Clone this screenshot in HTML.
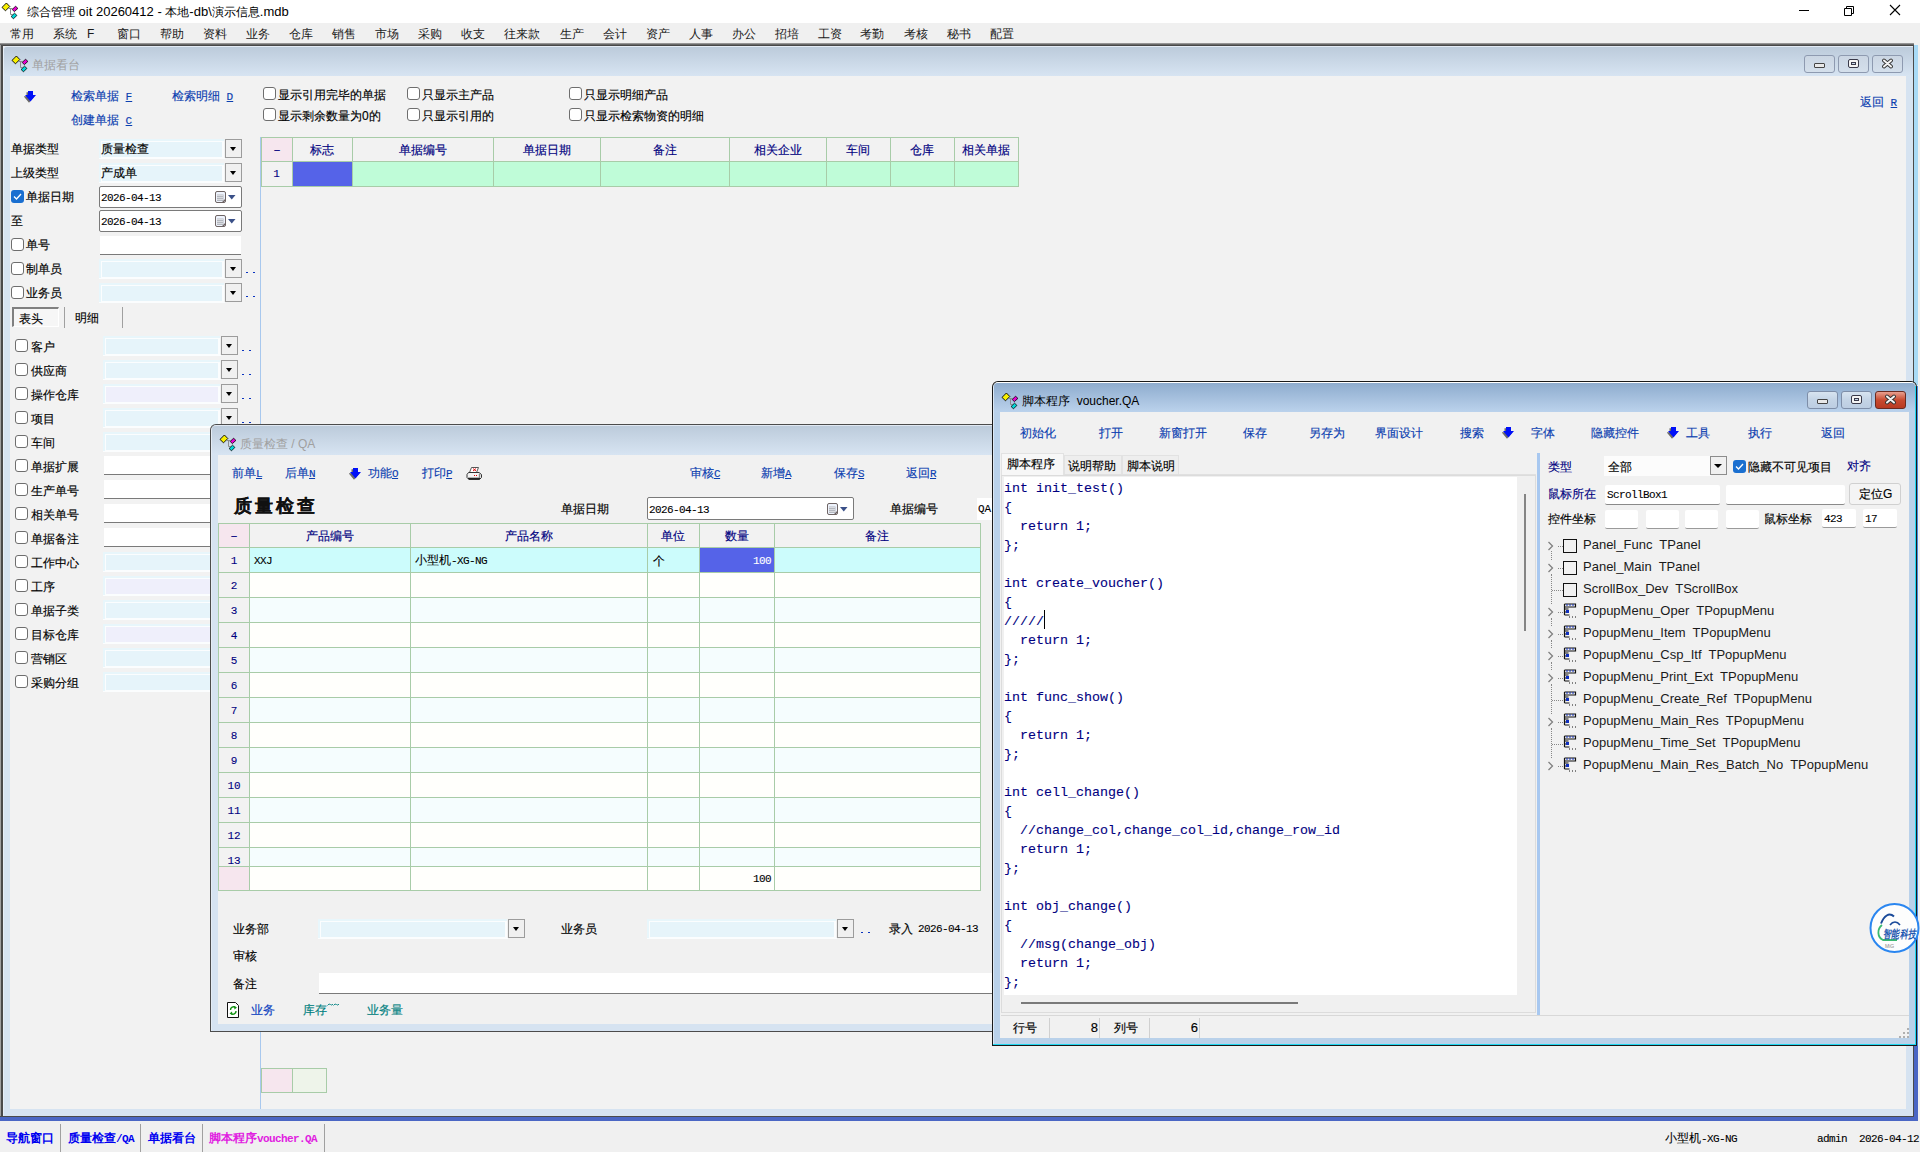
<!DOCTYPE html><html><head><meta charset="utf-8"><style>
*{margin:0;padding:0;box-sizing:border-box}
html,body{width:1920px;height:1152px;overflow:hidden;background:#f0f0f0}
body{position:relative;font-family:"Liberation Sans",sans-serif;font-size:12px;color:#000}
div{position:absolute}
.t{white-space:pre;-webkit-text-stroke:0.15px currentColor}
.ns{-webkit-text-stroke:0}
.t.m{font-family:"Liberation Mono",monospace;-webkit-text-stroke:0.1px currentColor}
.lk{color:#0c40b0}
.nv{color:#000080}
.cb{width:13px;height:13px;border:1px solid #6e6e6e;border-radius:3px;background:#fff}
.cbk{width:13px;height:13px;border-radius:3px;background:#1a6fd0}
.dd{background:#f0f0f0;border:1px solid #8a8a8a}
.ddarr{width:0;height:0;border-left:4px solid transparent;border-right:4px solid transparent;border-top:4px solid #000}
</style></head><body><div style="left:0px;top:0px;width:1920px;height:23px;background:#fff"></div>
<svg style="position:absolute;left:1px;top:0px" width="20" height="20" viewBox="0 0 20 20">
<path d="M7.8 8.5H11.5M9.5 8.5V14.5H11.5" stroke="#8c8c8c" stroke-width="1" fill="none"/>
<path d="M5.4 3L8.8 6.5L4.5 10.8L1 7.4Z" fill="#f8f000" stroke="#000" stroke-width="0.9"/>
<path d="M14.5 6.2L16.9 8.4L13.4 11.6L11.2 9.5Z" fill="#e800d0" stroke="#000" stroke-width="0.8"/>
<path d="M13.5 13.2L15.9 15.4L12.5 18.8L10.1 16.5Z" fill="#00d8d8" stroke="#000" stroke-width="0.8"/>
</svg>
<div class="t ns" style="left:27px;top:4.0px;height:16px;line-height:16px;font-size:12px">综合管理<span style="font-size:13px"> oit 20260412 - </span>本地<span style="font-size:13px">-db\</span>演示信息<span style="font-size:13px">.mdb</span></div>
<div style="left:1799px;top:10px;width:10px;height:1px;background:#000"></div>
<svg style="position:absolute;left:1843px;top:4px" width="13" height="13"><path d="M1.5 4.5h7v7h-7z M3.5 4.5V2.5h7v7h-2" stroke="#000" stroke-width="1" fill="none"/></svg>
<svg style="position:absolute;left:1889px;top:4px" width="13" height="13"><path d="M1 1L11 11M11 1L1 11" stroke="#000" stroke-width="1.1"/></svg>
<div style="left:0px;top:23px;width:1920px;height:20px;background:#f0f0f0"></div>
<div class="t ns" style="left:10px;top:26.0px;height:16px;line-height:16px;font-size:12px;color:#1a1a1a">常用</div>
<div class="t ns" style="left:53px;top:26.0px;height:16px;line-height:16px;font-size:12px;color:#1a1a1a">系统</div>
<div class="t ns" style="left:87px;top:26.0px;height:16px;line-height:16px;font-size:12px;color:#1a1a1a">F</div>
<div class="t ns" style="left:117px;top:26.0px;height:16px;line-height:16px;font-size:12px;color:#1a1a1a">窗口</div>
<div class="t ns" style="left:160px;top:26.0px;height:16px;line-height:16px;font-size:12px;color:#1a1a1a">帮助</div>
<div class="t ns" style="left:203px;top:26.0px;height:16px;line-height:16px;font-size:12px;color:#1a1a1a">资料</div>
<div class="t ns" style="left:246px;top:26.0px;height:16px;line-height:16px;font-size:12px;color:#1a1a1a">业务</div>
<div class="t ns" style="left:289px;top:26.0px;height:16px;line-height:16px;font-size:12px;color:#1a1a1a">仓库</div>
<div class="t ns" style="left:332px;top:26.0px;height:16px;line-height:16px;font-size:12px;color:#1a1a1a">销售</div>
<div class="t ns" style="left:375px;top:26.0px;height:16px;line-height:16px;font-size:12px;color:#1a1a1a">市场</div>
<div class="t ns" style="left:418px;top:26.0px;height:16px;line-height:16px;font-size:12px;color:#1a1a1a">采购</div>
<div class="t ns" style="left:461px;top:26.0px;height:16px;line-height:16px;font-size:12px;color:#1a1a1a">收支</div>
<div class="t ns" style="left:504px;top:26.0px;height:16px;line-height:16px;font-size:12px;color:#1a1a1a">往来款</div>
<div class="t ns" style="left:560px;top:26.0px;height:16px;line-height:16px;font-size:12px;color:#1a1a1a">生产</div>
<div class="t ns" style="left:603px;top:26.0px;height:16px;line-height:16px;font-size:12px;color:#1a1a1a">会计</div>
<div class="t ns" style="left:646px;top:26.0px;height:16px;line-height:16px;font-size:12px;color:#1a1a1a">资产</div>
<div class="t ns" style="left:689px;top:26.0px;height:16px;line-height:16px;font-size:12px;color:#1a1a1a">人事</div>
<div class="t ns" style="left:732px;top:26.0px;height:16px;line-height:16px;font-size:12px;color:#1a1a1a">办公</div>
<div class="t ns" style="left:775px;top:26.0px;height:16px;line-height:16px;font-size:12px;color:#1a1a1a">招培</div>
<div class="t ns" style="left:818px;top:26.0px;height:16px;line-height:16px;font-size:12px;color:#1a1a1a">工资</div>
<div class="t ns" style="left:860px;top:26.0px;height:16px;line-height:16px;font-size:12px;color:#1a1a1a">考勤</div>
<div class="t ns" style="left:904px;top:26.0px;height:16px;line-height:16px;font-size:12px;color:#1a1a1a">考核</div>
<div class="t ns" style="left:947px;top:26.0px;height:16px;line-height:16px;font-size:12px;color:#1a1a1a">秘书</div>
<div class="t ns" style="left:990px;top:26.0px;height:16px;line-height:16px;font-size:12px;color:#1a1a1a">配置</div>
<div style="left:1914px;top:45px;width:4px;height:340px;background:#a8daf6"></div>
<div style="left:1918px;top:45px;width:2px;height:1076px;background:#f0f0f0"></div>
<div style="left:1914px;top:1045px;width:4px;height:76px;background:#4a66c4"></div>
<div style="left:0px;top:1117px;width:1918px;height:4px;background:#4a66c4"></div>
<div style="left:0px;top:43px;width:1914px;height:1px;background:#959595"></div>
<div style="left:0px;top:44px;width:1914px;height:1px;background:#686868"></div>
<div style="left:0px;top:45px;width:1914px;height:1px;background:#474747"></div>
<div style="left:0px;top:45px;width:1px;height:1072px;background:#a0a0a0"></div>
<div style="left:1px;top:45px;width:2px;height:1072px;background:#4a4a4a"></div>
<div style="left:1913px;top:45px;width:1px;height:1072px;background:#4a4a4a"></div>
<div style="left:0px;top:1116px;width:1914px;height:1px;background:#4a4a4a"></div>
<div style="left:3px;top:46px;width:1910px;height:1070px;background:#d6e3f1;border-top:1px solid #e3ebf5;border-left:1px solid #e6eef7;border-top-left-radius:4px"></div>
<div style="left:4px;top:47px;width:1909px;height:29px;background:linear-gradient(#bccbdb,#d7e4f2);border-top-left-radius:3px"></div>
<div style="left:10px;top:76px;width:1896px;height:1033px;background:#f2f2f2"></div>
<svg style="position:absolute;left:11px;top:53px" width="20" height="20" viewBox="0 0 20 20">
<path d="M7.8 8.5H11.5M9.5 8.5V14.5H11.5" stroke="#8c8c8c" stroke-width="1" fill="none"/>
<path d="M5.4 3L8.8 6.5L4.5 10.8L1 7.4Z" fill="#f8f000" stroke="#000" stroke-width="0.9"/>
<path d="M14.5 6.2L16.9 8.4L13.4 11.6L11.2 9.5Z" fill="#e800d0" stroke="#000" stroke-width="0.8"/>
<path d="M13.5 13.2L15.9 15.4L12.5 18.8L10.1 16.5Z" fill="#00d8d8" stroke="#000" stroke-width="0.8"/>
</svg>
<div class="t ns" style="left:32px;top:57.0px;height:16px;line-height:16px;font-size:12px;color:#a0a0a0">单据看台</div>
<div style="left:1804px;top:55px;width:31px;height:18px;background:linear-gradient(#cbd6e3,#d4dfeb);border:1px solid #8e9ab0;border-radius:3px"></div>
<div style="left:1838px;top:55px;width:31px;height:18px;background:linear-gradient(#cbd6e3,#d4dfeb);border:1px solid #8e9ab0;border-radius:3px"></div>
<div style="left:1872px;top:55px;width:31px;height:18px;background:linear-gradient(#cbd6e3,#d4dfeb);border:1px solid #8e9ab0;border-radius:3px"></div>
<div style="left:1814px;top:63px;width:11px;height:5px;background:#e8e8e8;border:1px solid #444;border-radius:1px"></div>
<div style="left:1848px;top:59px;width:11px;height:9px;background:#f4f4f4;border:1.5px solid #3a3a4a;border-radius:2px"><div style="left:2px;top:2px;width:5px;height:3px;border:1px solid #3a3a4a;background:#c8d8ea"></div></div>
<svg style="position:absolute;left:1881px;top:58px" width="13" height="11"><path d="M3 2.5L10 8.5M10 2.5L3 8.5" stroke="#333" stroke-width="3.8" stroke-linecap="round"/><path d="M3 2.5L10 8.5M10 2.5L3 8.5" stroke="#f4f4f4" stroke-width="2" stroke-linecap="round"/></svg>
<svg style="position:absolute;left:24px;top:89.5px" width="13" height="13"><path d="M3 1h5v4h3l-5.5 6.5L0 5h3z" fill="#6a6a6a" transform="translate(-0.5,1.2)"/><path d="M3 1h5v4h3l-5.5 6.5L0 5h3z" fill="#0010f8" transform="translate(1,0)"/></svg>
<div class="t lk" style="left:71px;top:88.0px;height:16px;line-height:16px;font-size:12px">检索单据<span style="font-family:Liberation Mono;font-size:11px"> <u>F</u></span></div>
<div class="t lk" style="left:172px;top:88.0px;height:16px;line-height:16px;font-size:12px">检索明细<span style="font-family:Liberation Mono;font-size:11px"> <u>D</u></span></div>
<div class="t lk" style="left:71px;top:112.0px;height:16px;line-height:16px;font-size:12px">创建单据<span style="font-family:Liberation Mono;font-size:11px"> <u>C</u></span></div>
<div class="t lk" style="left:1860px;top:94.0px;height:16px;line-height:16px;font-size:12px">返回<span style="font-family:Liberation Mono;font-size:11px"> <u>R</u></span></div>
<div class="cb" style="left:263px;top:87px"></div>
<div class="t" style="left:278px;top:86.5px;height:16px;line-height:16px;font-size:12px">显示引用完毕的单据</div>
<div class="cb" style="left:263px;top:108px"></div>
<div class="t" style="left:278px;top:107.5px;height:16px;line-height:16px;font-size:12px">显示剩余数量为0的</div>
<div class="cb" style="left:407px;top:87px"></div>
<div class="t" style="left:422px;top:86.5px;height:16px;line-height:16px;font-size:12px">只显示主产品</div>
<div class="cb" style="left:407px;top:108px"></div>
<div class="t" style="left:422px;top:107.5px;height:16px;line-height:16px;font-size:12px">只显示引用的</div>
<div class="cb" style="left:569px;top:87px"></div>
<div class="t" style="left:584px;top:86.5px;height:16px;line-height:16px;font-size:12px">只显示明细产品</div>
<div class="cb" style="left:569px;top:108px"></div>
<div class="t" style="left:584px;top:107.5px;height:16px;line-height:16px;font-size:12px">只显示检索物资的明细</div>
<div style="left:260px;top:137px;width:1px;height:972px;background:#a8c8ee"></div>
<div class="t" style="left:11px;top:141.0px;height:16px;line-height:16px;font-size:12px">单据类型</div>
<div style="left:99px;top:139px;width:125px;height:19px;background:#e8f6fb"></div>
<div style="left:99px;top:158px;width:126px;height:1px;background:#fbfdfe"></div>
<div style="left:101px;top:141px;width:123px;height:17px;background:#e6f4fa;border:1px solid #fbfdfe;border-right-width:2px"></div>
<div style="left:225px;top:139px;width:17px;height:19px;background:#f0f0f0;border:1px solid #9c9c9c"></div>
<div class="ddarr" style="left:229.5px;top:147.0px;border-left-width:3.5px;border-right-width:3.5px"></div>
<div class="t" style="left:101px;top:141.0px;height:16px;line-height:16px;font-size:12px">质量检查</div>
<div class="t" style="left:11px;top:165.0px;height:16px;line-height:16px;font-size:12px">上级类型</div>
<div style="left:99px;top:163px;width:125px;height:19px;background:#e8f6fb"></div>
<div style="left:99px;top:182px;width:126px;height:1px;background:#fbfdfe"></div>
<div style="left:101px;top:165px;width:123px;height:17px;background:#e6f4fa;border:1px solid #fbfdfe;border-right-width:2px"></div>
<div style="left:225px;top:163px;width:17px;height:19px;background:#f0f0f0;border:1px solid #9c9c9c"></div>
<div class="ddarr" style="left:229.5px;top:171.0px;border-left-width:3.5px;border-right-width:3.5px"></div>
<div class="t" style="left:101px;top:165.0px;height:16px;line-height:16px;font-size:12px">产成单</div>
<div class="cbk" style="left:11px;top:190px"><svg width="13" height="13" style="position:absolute;left:0;top:0"><path d="M3 6.5L5.5 9L10 4" stroke="#fff" stroke-width="1.3" fill="none"/></svg></div>
<div class="t" style="left:26px;top:189.0px;height:16px;line-height:16px;font-size:12px">单据日期</div>
<div style="left:99px;top:186px;width:143px;height:22px;background:#fff;border:1px solid #7a7a7a;border-radius:2px"></div>
<div class="t m" style="left:101px;top:190.0px;height:16px;line-height:16px;font-size:11px;letter-spacing:-0.6px">2026-04-13</div>
<svg style="position:absolute;left:215px;top:191.0px" width="12" height="13"><rect x="0.5" y="0.5" width="10" height="11" rx="1.5" fill="#eef3fc" stroke="#6e6464"/><rect x="2" y="3.5" width="6.5" height="6.5" fill="#b4b8c0"/><rect x="2.5" y="4" width="1" height="1" fill="#fff"/><rect x="2.5" y="6" width="1" height="1" fill="#fff"/><rect x="2.5" y="8" width="1" height="1" fill="#fff"/><rect x="4.5" y="4" width="1" height="1" fill="#fff"/><rect x="4.5" y="6" width="1" height="1" fill="#fff"/><rect x="4.5" y="8" width="1" height="1" fill="#fff"/><rect x="6.5" y="4" width="1" height="1" fill="#fff"/><rect x="6.5" y="6" width="1" height="1" fill="#fff"/><rect x="6.5" y="8" width="1" height="1" fill="#fff"/><path d="M7.5 11.5L10.5 8.5" stroke="#6e6464" stroke-width="1.2"/></svg>
<svg style="position:absolute;left:228px;top:195.0px" width="8" height="5"><path d="M0 0H7.5L3.75 4.5Z" fill="#3a5088"/></svg>
<div class="t" style="left:11px;top:213.0px;height:16px;line-height:16px;font-size:12px">至</div>
<div style="left:99px;top:210px;width:143px;height:22px;background:#fff;border:1px solid #7a7a7a;border-radius:2px"></div>
<div class="t m" style="left:101px;top:214.0px;height:16px;line-height:16px;font-size:11px;letter-spacing:-0.6px">2026-04-13</div>
<svg style="position:absolute;left:215px;top:215.0px" width="12" height="13"><rect x="0.5" y="0.5" width="10" height="11" rx="1.5" fill="#eef3fc" stroke="#6e6464"/><rect x="2" y="3.5" width="6.5" height="6.5" fill="#b4b8c0"/><rect x="2.5" y="4" width="1" height="1" fill="#fff"/><rect x="2.5" y="6" width="1" height="1" fill="#fff"/><rect x="2.5" y="8" width="1" height="1" fill="#fff"/><rect x="4.5" y="4" width="1" height="1" fill="#fff"/><rect x="4.5" y="6" width="1" height="1" fill="#fff"/><rect x="4.5" y="8" width="1" height="1" fill="#fff"/><rect x="6.5" y="4" width="1" height="1" fill="#fff"/><rect x="6.5" y="6" width="1" height="1" fill="#fff"/><rect x="6.5" y="8" width="1" height="1" fill="#fff"/><path d="M7.5 11.5L10.5 8.5" stroke="#6e6464" stroke-width="1.2"/></svg>
<svg style="position:absolute;left:228px;top:219.0px" width="8" height="5"><path d="M0 0H7.5L3.75 4.5Z" fill="#3a5088"/></svg>
<div class="cb" style="left:11px;top:238px"></div>
<div class="t" style="left:26px;top:237.0px;height:16px;line-height:16px;font-size:12px">单号</div>
<div style="left:100px;top:236px;width:141px;height:19px;background:#fff;border-bottom:1px solid #7a7a7a"></div>
<div class="cb" style="left:11px;top:262px"></div>
<div class="t" style="left:26px;top:261.0px;height:16px;line-height:16px;font-size:12px">制单员</div>
<div style="left:99px;top:259px;width:125px;height:19px;background:#e8f6fb"></div>
<div style="left:99px;top:278px;width:126px;height:1px;background:#fbfdfe"></div>
<div style="left:101px;top:261px;width:123px;height:17px;background:#e6f4fa;border:1px solid #fbfdfe;border-right-width:2px"></div>
<div style="left:225px;top:259px;width:17px;height:19px;background:#f0f0f0;border:1px solid #9c9c9c"></div>
<div class="ddarr" style="left:229.5px;top:267.0px;border-left-width:3.5px;border-right-width:3.5px"></div>
<div style="left:246px;top:272px;width:2px;height:1px;background:#0a34c0"></div>
<div style="left:253px;top:272px;width:2px;height:1px;background:#0a34c0"></div>
<div class="cb" style="left:11px;top:286px"></div>
<div class="t" style="left:26px;top:285.0px;height:16px;line-height:16px;font-size:12px">业务员</div>
<div style="left:99px;top:283px;width:125px;height:19px;background:#e8f6fb"></div>
<div style="left:99px;top:302px;width:126px;height:1px;background:#fbfdfe"></div>
<div style="left:101px;top:285px;width:123px;height:17px;background:#e6f4fa;border:1px solid #fbfdfe;border-right-width:2px"></div>
<div style="left:225px;top:283px;width:17px;height:19px;background:#f0f0f0;border:1px solid #9c9c9c"></div>
<div class="ddarr" style="left:229.5px;top:291.0px;border-left-width:3.5px;border-right-width:3.5px"></div>
<div style="left:246px;top:296px;width:2px;height:1px;background:#0a34c0"></div>
<div style="left:253px;top:296px;width:2px;height:1px;background:#0a34c0"></div>
<div style="left:12px;top:307px;width:47px;height:20px;background:#f6f6f6;border-top:2px solid #808080;border-left:2px solid #808080;border-right:1px solid #fff;border-bottom:1px solid #fff"></div>
<div class="t" style="left:19px;top:311.0px;height:16px;line-height:16px;font-size:12px">表头</div>
<div style="left:64px;top:307px;width:1px;height:21px;background:#a0a0a0"></div>
<div style="left:122px;top:307px;width:1px;height:21px;background:#a0a0a0"></div>
<div class="t" style="left:75px;top:310.0px;height:16px;line-height:16px;font-size:12px">明细</div>
<div class="cb" style="left:15px;top:339.0px"></div>
<div class="t" style="left:31px;top:338.5px;height:16px;line-height:16px;font-size:12px">客户</div>
<div style="left:103px;top:336.0px;width:117px;height:19.0px;background:#e8f6fb"></div>
<div style="left:103px;top:355.0px;width:118px;height:1px;background:#fbfdfe"></div>
<div style="left:105px;top:338.0px;width:115px;height:17.0px;background:#e6f4fa;border:1px solid #fbfdfe;border-right-width:2px"></div>
<div style="left:221px;top:336.0px;width:17px;height:19.0px;background:#f0f0f0;border:1px solid #9c9c9c"></div>
<div class="ddarr" style="left:225.5px;top:344.0px;border-left-width:3.5px;border-right-width:3.5px"></div>
<div style="left:242px;top:349.5px;width:2px;height:1px;background:#0a34c0"></div>
<div style="left:249px;top:349.5px;width:2px;height:1px;background:#0a34c0"></div>
<div class="cb" style="left:15px;top:363.0px"></div>
<div class="t" style="left:31px;top:362.5px;height:16px;line-height:16px;font-size:12px">供应商</div>
<div style="left:103px;top:360.0px;width:117px;height:19.0px;background:#e8f6fb"></div>
<div style="left:103px;top:379.0px;width:118px;height:1px;background:#fbfdfe"></div>
<div style="left:105px;top:362.0px;width:115px;height:17.0px;background:#e6f4fa;border:1px solid #fbfdfe;border-right-width:2px"></div>
<div style="left:221px;top:360.0px;width:17px;height:19.0px;background:#f0f0f0;border:1px solid #9c9c9c"></div>
<div class="ddarr" style="left:225.5px;top:368.0px;border-left-width:3.5px;border-right-width:3.5px"></div>
<div style="left:242px;top:373.5px;width:2px;height:1px;background:#0a34c0"></div>
<div style="left:249px;top:373.5px;width:2px;height:1px;background:#0a34c0"></div>
<div class="cb" style="left:15px;top:387.0px"></div>
<div class="t" style="left:31px;top:386.5px;height:16px;line-height:16px;font-size:12px">操作仓库</div>
<div style="left:103px;top:384.0px;width:117px;height:19.0px;background:#e8f6fb"></div>
<div style="left:103px;top:403.0px;width:118px;height:1px;background:#fbfdfe"></div>
<div style="left:105px;top:386.0px;width:115px;height:17.0px;background:#efeffb;border:1px solid #fbfdfe;border-right-width:2px"></div>
<div style="left:221px;top:384.0px;width:17px;height:19.0px;background:#f0f0f0;border:1px solid #9c9c9c"></div>
<div class="ddarr" style="left:225.5px;top:392.0px;border-left-width:3.5px;border-right-width:3.5px"></div>
<div style="left:242px;top:397.5px;width:2px;height:1px;background:#0a34c0"></div>
<div style="left:249px;top:397.5px;width:2px;height:1px;background:#0a34c0"></div>
<div class="cb" style="left:15px;top:411.0px"></div>
<div class="t" style="left:31px;top:410.5px;height:16px;line-height:16px;font-size:12px">项目</div>
<div style="left:103px;top:408.0px;width:117px;height:19.0px;background:#e8f6fb"></div>
<div style="left:103px;top:427.0px;width:118px;height:1px;background:#fbfdfe"></div>
<div style="left:105px;top:410.0px;width:115px;height:17.0px;background:#e6f4fa;border:1px solid #fbfdfe;border-right-width:2px"></div>
<div style="left:221px;top:408.0px;width:17px;height:19.0px;background:#f0f0f0;border:1px solid #9c9c9c"></div>
<div class="ddarr" style="left:225.5px;top:416.0px;border-left-width:3.5px;border-right-width:3.5px"></div>
<div style="left:242px;top:421.5px;width:2px;height:1px;background:#0a34c0"></div>
<div style="left:249px;top:421.5px;width:2px;height:1px;background:#0a34c0"></div>
<div class="cb" style="left:15px;top:435.0px"></div>
<div class="t" style="left:31px;top:434.5px;height:16px;line-height:16px;font-size:12px">车间</div>
<div style="left:103px;top:432.0px;width:117px;height:19.0px;background:#e8f6fb"></div>
<div style="left:103px;top:451.0px;width:118px;height:1px;background:#fbfdfe"></div>
<div style="left:105px;top:434.0px;width:115px;height:17.0px;background:#e6f4fa;border:1px solid #fbfdfe;border-right-width:2px"></div>
<div style="left:221px;top:432.0px;width:17px;height:19.0px;background:#f0f0f0;border:1px solid #9c9c9c"></div>
<div class="ddarr" style="left:225.5px;top:440.0px;border-left-width:3.5px;border-right-width:3.5px"></div>
<div style="left:242px;top:445.5px;width:2px;height:1px;background:#0a34c0"></div>
<div style="left:249px;top:445.5px;width:2px;height:1px;background:#0a34c0"></div>
<div class="cb" style="left:15px;top:459.0px"></div>
<div class="t" style="left:31px;top:458.5px;height:16px;line-height:16px;font-size:12px">单据扩展</div>
<div style="left:104px;top:455.5px;width:150px;height:19px;background:#fff;border-bottom:1px solid #7a7a7a"></div>
<div class="cb" style="left:15px;top:483.0px"></div>
<div class="t" style="left:31px;top:482.5px;height:16px;line-height:16px;font-size:12px">生产单号</div>
<div style="left:104px;top:479.5px;width:150px;height:19px;background:#fff;border-bottom:1px solid #7a7a7a"></div>
<div class="cb" style="left:15px;top:507.0px"></div>
<div class="t" style="left:31px;top:506.5px;height:16px;line-height:16px;font-size:12px">相关单号</div>
<div style="left:104px;top:503.5px;width:150px;height:19px;background:#fff;border-bottom:1px solid #7a7a7a"></div>
<div class="cb" style="left:15px;top:531.0px"></div>
<div class="t" style="left:31px;top:530.5px;height:16px;line-height:16px;font-size:12px">单据备注</div>
<div style="left:104px;top:527.5px;width:150px;height:19px;background:#fff;border-bottom:1px solid #7a7a7a"></div>
<div class="cb" style="left:15px;top:555.0px"></div>
<div class="t" style="left:31px;top:554.5px;height:16px;line-height:16px;font-size:12px">工作中心</div>
<div style="left:103px;top:552.0px;width:117px;height:19.0px;background:#e8f6fb"></div>
<div style="left:103px;top:571.0px;width:118px;height:1px;background:#fbfdfe"></div>
<div style="left:105px;top:554.0px;width:115px;height:17.0px;background:#e6f4fa;border:1px solid #fbfdfe;border-right-width:2px"></div>
<div style="left:221px;top:552.0px;width:17px;height:19.0px;background:#f0f0f0;border:1px solid #9c9c9c"></div>
<div class="ddarr" style="left:225.5px;top:560.0px;border-left-width:3.5px;border-right-width:3.5px"></div>
<div style="left:242px;top:565.5px;width:2px;height:1px;background:#0a34c0"></div>
<div style="left:249px;top:565.5px;width:2px;height:1px;background:#0a34c0"></div>
<div class="cb" style="left:15px;top:579.0px"></div>
<div class="t" style="left:31px;top:578.5px;height:16px;line-height:16px;font-size:12px">工序</div>
<div style="left:103px;top:576.0px;width:117px;height:19.0px;background:#e8f6fb"></div>
<div style="left:103px;top:595.0px;width:118px;height:1px;background:#fbfdfe"></div>
<div style="left:105px;top:578.0px;width:115px;height:17.0px;background:#efeffb;border:1px solid #fbfdfe;border-right-width:2px"></div>
<div style="left:221px;top:576.0px;width:17px;height:19.0px;background:#f0f0f0;border:1px solid #9c9c9c"></div>
<div class="ddarr" style="left:225.5px;top:584.0px;border-left-width:3.5px;border-right-width:3.5px"></div>
<div style="left:242px;top:589.5px;width:2px;height:1px;background:#0a34c0"></div>
<div style="left:249px;top:589.5px;width:2px;height:1px;background:#0a34c0"></div>
<div class="cb" style="left:15px;top:603.0px"></div>
<div class="t" style="left:31px;top:602.5px;height:16px;line-height:16px;font-size:12px">单据子类</div>
<div style="left:103px;top:600.0px;width:117px;height:19.0px;background:#e8f6fb"></div>
<div style="left:103px;top:619.0px;width:118px;height:1px;background:#fbfdfe"></div>
<div style="left:105px;top:602.0px;width:115px;height:17.0px;background:#e6f4fa;border:1px solid #fbfdfe;border-right-width:2px"></div>
<div style="left:221px;top:600.0px;width:17px;height:19.0px;background:#f0f0f0;border:1px solid #9c9c9c"></div>
<div class="ddarr" style="left:225.5px;top:608.0px;border-left-width:3.5px;border-right-width:3.5px"></div>
<div style="left:242px;top:613.5px;width:2px;height:1px;background:#0a34c0"></div>
<div style="left:249px;top:613.5px;width:2px;height:1px;background:#0a34c0"></div>
<div class="cb" style="left:15px;top:627.0px"></div>
<div class="t" style="left:31px;top:626.5px;height:16px;line-height:16px;font-size:12px">目标仓库</div>
<div style="left:103px;top:624.0px;width:117px;height:19.0px;background:#e8f6fb"></div>
<div style="left:103px;top:643.0px;width:118px;height:1px;background:#fbfdfe"></div>
<div style="left:105px;top:626.0px;width:115px;height:17.0px;background:#efeffb;border:1px solid #fbfdfe;border-right-width:2px"></div>
<div style="left:221px;top:624.0px;width:17px;height:19.0px;background:#f0f0f0;border:1px solid #9c9c9c"></div>
<div class="ddarr" style="left:225.5px;top:632.0px;border-left-width:3.5px;border-right-width:3.5px"></div>
<div style="left:242px;top:637.5px;width:2px;height:1px;background:#0a34c0"></div>
<div style="left:249px;top:637.5px;width:2px;height:1px;background:#0a34c0"></div>
<div class="cb" style="left:15px;top:651.0px"></div>
<div class="t" style="left:31px;top:650.5px;height:16px;line-height:16px;font-size:12px">营销区</div>
<div style="left:103px;top:648.0px;width:117px;height:19.0px;background:#e8f6fb"></div>
<div style="left:103px;top:667.0px;width:118px;height:1px;background:#fbfdfe"></div>
<div style="left:105px;top:650.0px;width:115px;height:17.0px;background:#e6f4fa;border:1px solid #fbfdfe;border-right-width:2px"></div>
<div style="left:221px;top:648.0px;width:17px;height:19.0px;background:#f0f0f0;border:1px solid #9c9c9c"></div>
<div class="ddarr" style="left:225.5px;top:656.0px;border-left-width:3.5px;border-right-width:3.5px"></div>
<div style="left:242px;top:661.5px;width:2px;height:1px;background:#0a34c0"></div>
<div style="left:249px;top:661.5px;width:2px;height:1px;background:#0a34c0"></div>
<div class="cb" style="left:15px;top:675.0px"></div>
<div class="t" style="left:31px;top:674.5px;height:16px;line-height:16px;font-size:12px">采购分组</div>
<div style="left:103px;top:672.0px;width:117px;height:19.0px;background:#e8f6fb"></div>
<div style="left:103px;top:691.0px;width:118px;height:1px;background:#fbfdfe"></div>
<div style="left:105px;top:674.0px;width:115px;height:17.0px;background:#e6f4fa;border:1px solid #fbfdfe;border-right-width:2px"></div>
<div style="left:221px;top:672.0px;width:17px;height:19.0px;background:#f0f0f0;border:1px solid #9c9c9c"></div>
<div class="ddarr" style="left:225.5px;top:680.0px;border-left-width:3.5px;border-right-width:3.5px"></div>
<div style="left:242px;top:685.5px;width:2px;height:1px;background:#0a34c0"></div>
<div style="left:249px;top:685.5px;width:2px;height:1px;background:#0a34c0"></div>
<div style="left:261px;top:137px;width:758px;height:50px;background:#a8cca8"></div>
<div style="left:262px;top:138px;width:30px;height:23px;background:#f6e6ee"></div>
<div style="left:262px;top:162px;width:30px;height:24px;background:#f2f2f2"></div>
<div style="left:293px;top:138px;width:59px;height:23px;background:#f2f2f2"></div>
<div style="left:293px;top:162px;width:59px;height:24px;background:#5563e8"></div>
<div style="left:353px;top:138px;width:140px;height:23px;background:#f2f2f2"></div>
<div style="left:353px;top:162px;width:140px;height:24px;background:#bffcd8"></div>
<div style="left:494px;top:138px;width:106px;height:23px;background:#f2f2f2"></div>
<div style="left:494px;top:162px;width:106px;height:24px;background:#bffcd8"></div>
<div style="left:601px;top:138px;width:128px;height:23px;background:#f2f2f2"></div>
<div style="left:601px;top:162px;width:128px;height:24px;background:#bffcd8"></div>
<div style="left:730px;top:138px;width:96px;height:23px;background:#f2f2f2"></div>
<div style="left:730px;top:162px;width:96px;height:24px;background:#bffcd8"></div>
<div style="left:827px;top:138px;width:63px;height:23px;background:#f2f2f2"></div>
<div style="left:827px;top:162px;width:63px;height:24px;background:#bffcd8"></div>
<div style="left:891px;top:138px;width:63px;height:23px;background:#f2f2f2"></div>
<div style="left:891px;top:162px;width:63px;height:24px;background:#bffcd8"></div>
<div style="left:955px;top:138px;width:63px;height:23px;background:#f2f2f2"></div>
<div style="left:955px;top:162px;width:63px;height:24px;background:#bffcd8"></div>
<div class="t nv" style="left:261px;top:141.5px;width:31px;text-align:center;height:16px;line-height:16px;font-size:12px">－</div>
<div class="t nv" style="left:292px;top:141.5px;width:60px;text-align:center;height:16px;line-height:16px;font-size:12px">标志</div>
<div class="t nv" style="left:352px;top:141.5px;width:141px;text-align:center;height:16px;line-height:16px;font-size:12px">单据编号</div>
<div class="t nv" style="left:493px;top:141.5px;width:107px;text-align:center;height:16px;line-height:16px;font-size:12px">单据日期</div>
<div class="t nv" style="left:600px;top:141.5px;width:129px;text-align:center;height:16px;line-height:16px;font-size:12px">备注</div>
<div class="t nv" style="left:729px;top:141.5px;width:97px;text-align:center;height:16px;line-height:16px;font-size:12px">相关企业</div>
<div class="t nv" style="left:826px;top:141.5px;width:64px;text-align:center;height:16px;line-height:16px;font-size:12px">车间</div>
<div class="t nv" style="left:890px;top:141.5px;width:64px;text-align:center;height:16px;line-height:16px;font-size:12px">仓库</div>
<div class="t nv" style="left:954px;top:141.5px;width:64px;text-align:center;height:16px;line-height:16px;font-size:12px">相关单据</div>
<div class="t nv m" style="left:261px;top:166.0px;width:31px;text-align:center;height:16px;line-height:16px;font-size:11px;-webkit-text-stroke:0.1px #000080">1</div>
<div style="left:261px;top:1068px;width:66px;height:25px;background:#a8cca8"></div>
<div style="left:262px;top:1069px;width:30px;height:23px;background:#f6e6ee"></div>
<div style="left:293px;top:1069px;width:33px;height:23px;background:#eef4ea"></div>
<div style="left:210px;top:424px;width:790px;height:608px;background:#4c4c4c;border-radius:6px 6px 0 0"></div>
<div style="left:211px;top:425px;width:789px;height:606px;background:#d6e3f1;border-radius:5px 5px 0 0;border-top:1px solid #e0e8f2;border-left:1px solid #e4ecf5"></div>
<div style="left:212px;top:426px;width:788px;height:29px;background:linear-gradient(#bccbdb,#d7e4f2);border-radius:4px 4px 0 0"></div>
<div style="left:218px;top:455px;width:782px;height:569px;background:#f1f1f1"></div>
<svg style="position:absolute;left:219px;top:432px" width="20" height="20" viewBox="0 0 20 20">
<path d="M7.8 8.5H11.5M9.5 8.5V14.5H11.5" stroke="#8c8c8c" stroke-width="1" fill="none"/>
<path d="M5.4 3L8.8 6.5L4.5 10.8L1 7.4Z" fill="#f8f000" stroke="#000" stroke-width="0.9"/>
<path d="M14.5 6.2L16.9 8.4L13.4 11.6L11.2 9.5Z" fill="#e800d0" stroke="#000" stroke-width="0.8"/>
<path d="M13.5 13.2L15.9 15.4L12.5 18.8L10.1 16.5Z" fill="#00d8d8" stroke="#000" stroke-width="0.8"/>
</svg>
<div class="t ns" style="left:240px;top:436.0px;height:16px;line-height:16px;font-size:12px;color:#a0a0a0">质量检查 / QA</div>
<div class="t lk" style="left:232px;top:465.0px;height:16px;line-height:16px;font-size:12px">前单<u style="font-family:Liberation Mono;font-size:11px;letter-spacing:-0.5px">L</u></div>
<div class="t lk" style="left:285px;top:465.0px;height:16px;line-height:16px;font-size:12px">后单<u style="font-family:Liberation Mono;font-size:11px;letter-spacing:-0.5px">N</u></div>
<svg style="position:absolute;left:349px;top:467px" width="13" height="13"><path d="M3 1h5v4h3l-5.5 6.5L0 5h3z" fill="#6a6a6a" transform="translate(-0.5,1.2)"/><path d="M3 1h5v4h3l-5.5 6.5L0 5h3z" fill="#0010f8" transform="translate(1,0)"/></svg>
<div class="t lk" style="left:368px;top:465.0px;height:16px;line-height:16px;font-size:12px">功能<u style="font-family:Liberation Mono;font-size:11px;letter-spacing:-0.5px">O</u></div>
<div class="t lk" style="left:422px;top:465.0px;height:16px;line-height:16px;font-size:12px">打印<u style="font-family:Liberation Mono;font-size:11px;letter-spacing:-0.5px">P</u></div>
<svg style="position:absolute;left:466px;top:466px" width="17" height="15"><path d="M5.5 1.5h7l-2 5h-7z" fill="#fff" stroke="#444" stroke-width="0.9"/><path d="M7 2.5l3 2.5M10 2.5l-3 2.5" stroke="#e00000" stroke-width="0.9"/><path d="M2.5 6.5h10.5l2.5 2v3l-2 2H3l-2-2v-3z" fill="#f4f4f4" stroke="#333" stroke-width="1"/><path d="M2 12.5h12" stroke="#222" stroke-width="1.6"/><path d="M13.5 8v4" stroke="#888" stroke-width="1.4"/><path d="M8 9.5h1M10 9.5h1" stroke="#e00000" stroke-width="1"/></svg>
<div class="t lk" style="left:690px;top:465.0px;height:16px;line-height:16px;font-size:12px">审核<u style="font-family:Liberation Mono;font-size:11px;letter-spacing:-0.5px">C</u></div>
<div class="t lk" style="left:761px;top:465.0px;height:16px;line-height:16px;font-size:12px">新增<u style="font-family:Liberation Mono;font-size:11px;letter-spacing:-0.5px">A</u></div>
<div class="t lk" style="left:834px;top:465.0px;height:16px;line-height:16px;font-size:12px">保存<u style="font-family:Liberation Mono;font-size:11px;letter-spacing:-0.5px">S</u></div>
<div class="t lk" style="left:906px;top:465.0px;height:16px;line-height:16px;font-size:12px">返回<u style="font-family:Liberation Mono;font-size:11px;letter-spacing:-0.5px">R</u></div>
<div class="t" style="left:234px;top:494.0px;height:24px;line-height:24px;font-size:18px;font-weight:bold;font-family:'Liberation Serif';letter-spacing:3px;color:#111">质量检查</div>
<div class="t" style="left:561px;top:501.0px;height:16px;line-height:16px;font-size:12px">单据日期</div>
<div style="left:647px;top:497px;width:207px;height:23px;background:#fff;border:1px solid #7a7a7a;border-radius:2px"></div>
<div class="t m" style="left:649px;top:501.5px;height:16px;line-height:16px;font-size:11px;letter-spacing:-0.6px">2026-04-13</div>
<svg style="position:absolute;left:827px;top:502.5px" width="12" height="13"><rect x="0.5" y="0.5" width="10" height="11" rx="1.5" fill="#eef3fc" stroke="#6e6464"/><rect x="2" y="3.5" width="6.5" height="6.5" fill="#b4b8c0"/><rect x="2.5" y="4" width="1" height="1" fill="#fff"/><rect x="2.5" y="6" width="1" height="1" fill="#fff"/><rect x="2.5" y="8" width="1" height="1" fill="#fff"/><rect x="4.5" y="4" width="1" height="1" fill="#fff"/><rect x="4.5" y="6" width="1" height="1" fill="#fff"/><rect x="4.5" y="8" width="1" height="1" fill="#fff"/><rect x="6.5" y="4" width="1" height="1" fill="#fff"/><rect x="6.5" y="6" width="1" height="1" fill="#fff"/><rect x="6.5" y="8" width="1" height="1" fill="#fff"/><path d="M7.5 11.5L10.5 8.5" stroke="#6e6464" stroke-width="1.2"/></svg>
<svg style="position:absolute;left:840px;top:506.5px" width="8" height="5"><path d="M0 0H7.5L3.75 4.5Z" fill="#3a5088"/></svg>
<div class="t" style="left:890px;top:501.0px;height:16px;line-height:16px;font-size:12px">单据编号</div>
<div style="left:977px;top:498px;width:23px;height:22px;background:#fff"></div>
<div class="t m" style="left:978px;top:501.0px;height:16px;line-height:16px;font-size:11px">QA</div>
<div style="left:218px;top:523px;width:763px;height:368px;background:#a8cca8"></div>
<div style="left:219px;top:524px;width:30px;height:23px;background:#f6e6ee"></div>
<div style="left:250px;top:524px;width:160px;height:23px;background:#f2f2f2"></div>
<div style="left:411px;top:524px;width:236px;height:23px;background:#f2f2f2"></div>
<div style="left:648px;top:524px;width:51px;height:23px;background:#f2f2f2"></div>
<div style="left:700px;top:524px;width:74px;height:23px;background:#f2f2f2"></div>
<div style="left:775px;top:524px;width:205px;height:23px;background:#f2f2f2"></div>
<div class="t nv" style="left:219px;top:527.5px;width:30px;text-align:center;height:16px;line-height:16px;font-size:12px">－</div>
<div class="t nv" style="left:249px;top:527.5px;width:161px;text-align:center;height:16px;line-height:16px;font-size:12px">产品编号</div>
<div class="t nv" style="left:410px;top:527.5px;width:237px;text-align:center;height:16px;line-height:16px;font-size:12px">产品名称</div>
<div class="t nv" style="left:647px;top:527.5px;width:52px;text-align:center;height:16px;line-height:16px;font-size:12px">单位</div>
<div class="t nv" style="left:699px;top:527.5px;width:75px;text-align:center;height:16px;line-height:16px;font-size:12px">数量</div>
<div class="t nv" style="left:774px;top:527.5px;width:206px;text-align:center;height:16px;line-height:16px;font-size:12px">备注</div>
<div style="left:219px;top:548px;width:30px;height:24px;background:#f2f2f2"></div>
<div class="t nv m" style="left:219px;top:552.5px;width:30px;text-align:center;height:16px;line-height:16px;font-size:11px;-webkit-text-stroke:0.1px #000080">1</div>
<div style="left:250px;top:548px;width:160px;height:24px;background:#ccfcfc"></div>
<div style="left:411px;top:548px;width:236px;height:24px;background:#ccfcfc"></div>
<div style="left:648px;top:548px;width:51px;height:24px;background:#ccfcfc"></div>
<div style="left:700px;top:548px;width:74px;height:24px;background:#5563e8"></div>
<div style="left:775px;top:548px;width:205px;height:24px;background:#ccfcfc"></div>
<div style="left:219px;top:573px;width:30px;height:24px;background:#f2f2f2"></div>
<div class="t nv m" style="left:219px;top:577.5px;width:30px;text-align:center;height:16px;line-height:16px;font-size:11px;-webkit-text-stroke:0.1px #000080">2</div>
<div style="left:250px;top:573px;width:160px;height:24px;background:#fffffc"></div>
<div style="left:411px;top:573px;width:236px;height:24px;background:#fffffc"></div>
<div style="left:648px;top:573px;width:51px;height:24px;background:#fffffc"></div>
<div style="left:700px;top:573px;width:74px;height:24px;background:#fffffc"></div>
<div style="left:775px;top:573px;width:205px;height:24px;background:#fffffc"></div>
<div style="left:219px;top:598px;width:30px;height:24px;background:#f2f2f2"></div>
<div class="t nv m" style="left:219px;top:602.5px;width:30px;text-align:center;height:16px;line-height:16px;font-size:11px;-webkit-text-stroke:0.1px #000080">3</div>
<div style="left:250px;top:598px;width:160px;height:24px;background:#f5fdfe"></div>
<div style="left:411px;top:598px;width:236px;height:24px;background:#f5fdfe"></div>
<div style="left:648px;top:598px;width:51px;height:24px;background:#f5fdfe"></div>
<div style="left:700px;top:598px;width:74px;height:24px;background:#f5fdfe"></div>
<div style="left:775px;top:598px;width:205px;height:24px;background:#f5fdfe"></div>
<div style="left:219px;top:623px;width:30px;height:24px;background:#f2f2f2"></div>
<div class="t nv m" style="left:219px;top:627.5px;width:30px;text-align:center;height:16px;line-height:16px;font-size:11px;-webkit-text-stroke:0.1px #000080">4</div>
<div style="left:250px;top:623px;width:160px;height:24px;background:#fffffc"></div>
<div style="left:411px;top:623px;width:236px;height:24px;background:#fffffc"></div>
<div style="left:648px;top:623px;width:51px;height:24px;background:#fffffc"></div>
<div style="left:700px;top:623px;width:74px;height:24px;background:#fffffc"></div>
<div style="left:775px;top:623px;width:205px;height:24px;background:#fffffc"></div>
<div style="left:219px;top:648px;width:30px;height:24px;background:#f2f2f2"></div>
<div class="t nv m" style="left:219px;top:652.5px;width:30px;text-align:center;height:16px;line-height:16px;font-size:11px;-webkit-text-stroke:0.1px #000080">5</div>
<div style="left:250px;top:648px;width:160px;height:24px;background:#f5fdfe"></div>
<div style="left:411px;top:648px;width:236px;height:24px;background:#f5fdfe"></div>
<div style="left:648px;top:648px;width:51px;height:24px;background:#f5fdfe"></div>
<div style="left:700px;top:648px;width:74px;height:24px;background:#f5fdfe"></div>
<div style="left:775px;top:648px;width:205px;height:24px;background:#f5fdfe"></div>
<div style="left:219px;top:673px;width:30px;height:24px;background:#f2f2f2"></div>
<div class="t nv m" style="left:219px;top:677.5px;width:30px;text-align:center;height:16px;line-height:16px;font-size:11px;-webkit-text-stroke:0.1px #000080">6</div>
<div style="left:250px;top:673px;width:160px;height:24px;background:#fffffc"></div>
<div style="left:411px;top:673px;width:236px;height:24px;background:#fffffc"></div>
<div style="left:648px;top:673px;width:51px;height:24px;background:#fffffc"></div>
<div style="left:700px;top:673px;width:74px;height:24px;background:#fffffc"></div>
<div style="left:775px;top:673px;width:205px;height:24px;background:#fffffc"></div>
<div style="left:219px;top:698px;width:30px;height:24px;background:#f2f2f2"></div>
<div class="t nv m" style="left:219px;top:702.5px;width:30px;text-align:center;height:16px;line-height:16px;font-size:11px;-webkit-text-stroke:0.1px #000080">7</div>
<div style="left:250px;top:698px;width:160px;height:24px;background:#f5fdfe"></div>
<div style="left:411px;top:698px;width:236px;height:24px;background:#f5fdfe"></div>
<div style="left:648px;top:698px;width:51px;height:24px;background:#f5fdfe"></div>
<div style="left:700px;top:698px;width:74px;height:24px;background:#f5fdfe"></div>
<div style="left:775px;top:698px;width:205px;height:24px;background:#f5fdfe"></div>
<div style="left:219px;top:723px;width:30px;height:24px;background:#f2f2f2"></div>
<div class="t nv m" style="left:219px;top:727.5px;width:30px;text-align:center;height:16px;line-height:16px;font-size:11px;-webkit-text-stroke:0.1px #000080">8</div>
<div style="left:250px;top:723px;width:160px;height:24px;background:#fffffc"></div>
<div style="left:411px;top:723px;width:236px;height:24px;background:#fffffc"></div>
<div style="left:648px;top:723px;width:51px;height:24px;background:#fffffc"></div>
<div style="left:700px;top:723px;width:74px;height:24px;background:#fffffc"></div>
<div style="left:775px;top:723px;width:205px;height:24px;background:#fffffc"></div>
<div style="left:219px;top:748px;width:30px;height:24px;background:#f2f2f2"></div>
<div class="t nv m" style="left:219px;top:752.5px;width:30px;text-align:center;height:16px;line-height:16px;font-size:11px;-webkit-text-stroke:0.1px #000080">9</div>
<div style="left:250px;top:748px;width:160px;height:24px;background:#f5fdfe"></div>
<div style="left:411px;top:748px;width:236px;height:24px;background:#f5fdfe"></div>
<div style="left:648px;top:748px;width:51px;height:24px;background:#f5fdfe"></div>
<div style="left:700px;top:748px;width:74px;height:24px;background:#f5fdfe"></div>
<div style="left:775px;top:748px;width:205px;height:24px;background:#f5fdfe"></div>
<div style="left:219px;top:773px;width:30px;height:24px;background:#f2f2f2"></div>
<div class="t nv m" style="left:219px;top:777.5px;width:30px;text-align:center;height:16px;line-height:16px;font-size:11px;-webkit-text-stroke:0.1px #000080">10</div>
<div style="left:250px;top:773px;width:160px;height:24px;background:#fffffc"></div>
<div style="left:411px;top:773px;width:236px;height:24px;background:#fffffc"></div>
<div style="left:648px;top:773px;width:51px;height:24px;background:#fffffc"></div>
<div style="left:700px;top:773px;width:74px;height:24px;background:#fffffc"></div>
<div style="left:775px;top:773px;width:205px;height:24px;background:#fffffc"></div>
<div style="left:219px;top:798px;width:30px;height:24px;background:#f2f2f2"></div>
<div class="t nv m" style="left:219px;top:802.5px;width:30px;text-align:center;height:16px;line-height:16px;font-size:11px;-webkit-text-stroke:0.1px #000080">11</div>
<div style="left:250px;top:798px;width:160px;height:24px;background:#f5fdfe"></div>
<div style="left:411px;top:798px;width:236px;height:24px;background:#f5fdfe"></div>
<div style="left:648px;top:798px;width:51px;height:24px;background:#f5fdfe"></div>
<div style="left:700px;top:798px;width:74px;height:24px;background:#f5fdfe"></div>
<div style="left:775px;top:798px;width:205px;height:24px;background:#f5fdfe"></div>
<div style="left:219px;top:823px;width:30px;height:24px;background:#f2f2f2"></div>
<div class="t nv m" style="left:219px;top:827.5px;width:30px;text-align:center;height:16px;line-height:16px;font-size:11px;-webkit-text-stroke:0.1px #000080">12</div>
<div style="left:250px;top:823px;width:160px;height:24px;background:#fffffc"></div>
<div style="left:411px;top:823px;width:236px;height:24px;background:#fffffc"></div>
<div style="left:648px;top:823px;width:51px;height:24px;background:#fffffc"></div>
<div style="left:700px;top:823px;width:74px;height:24px;background:#fffffc"></div>
<div style="left:775px;top:823px;width:205px;height:24px;background:#fffffc"></div>
<div style="left:219px;top:848px;width:30px;height:18px;background:#f2f2f2"></div>
<div class="t nv m" style="left:219px;top:852.5px;width:30px;text-align:center;height:16px;line-height:16px;font-size:11px;-webkit-text-stroke:0.1px #000080">13</div>
<div style="left:250px;top:848px;width:160px;height:18px;background:#f5fdfe"></div>
<div style="left:411px;top:848px;width:236px;height:18px;background:#f5fdfe"></div>
<div style="left:648px;top:848px;width:51px;height:18px;background:#f5fdfe"></div>
<div style="left:700px;top:848px;width:74px;height:18px;background:#f5fdfe"></div>
<div style="left:775px;top:848px;width:205px;height:18px;background:#f5fdfe"></div>
<div style="left:219px;top:867px;width:30px;height:23px;background:#f6e6ee"></div>
<div style="left:250px;top:867px;width:160px;height:23px;background:#fffffc"></div>
<div style="left:411px;top:867px;width:236px;height:23px;background:#fffffc"></div>
<div style="left:648px;top:867px;width:51px;height:23px;background:#fffffc"></div>
<div style="left:700px;top:867px;width:74px;height:23px;background:#fffffc"></div>
<div style="left:775px;top:867px;width:205px;height:23px;background:#fffffc"></div>
<div class="t m" style="left:254px;top:553.0px;height:16px;line-height:16px;font-size:11px;letter-spacing:-0.6px">XXJ</div>
<div class="t m" style="left:415px;top:553.0px;height:16px;line-height:16px;font-size:11px;letter-spacing:-0.6px"><span style="font-size:12px;letter-spacing:0">小型机</span>-XG-NG</div>
<div class="t" style="left:653px;top:553.0px;height:16px;line-height:16px;font-size:12px">个</div>
<div class="t m" style="left:571px;top:553.0px;width:200px;text-align:right;height:16px;line-height:16px;font-size:11px;letter-spacing:-0.6px;color:#fff">100</div>
<div class="t m" style="left:571px;top:871.0px;width:200px;text-align:right;height:16px;line-height:16px;font-size:11px;letter-spacing:-0.6px">100</div>
<div class="t" style="left:233px;top:921.0px;height:16px;line-height:16px;font-size:12px">业务部</div>
<div style="left:318px;top:919px;width:189px;height:19px;background:#e8f6fb"></div>
<div style="left:318px;top:938px;width:190px;height:1px;background:#fbfdfe"></div>
<div style="left:320px;top:921px;width:187px;height:17px;background:#e6f4fa;border:1px solid #fbfdfe;border-right-width:2px"></div>
<div style="left:508px;top:919px;width:17px;height:19px;background:#f0f0f0;border:1px solid #9c9c9c"></div>
<div class="ddarr" style="left:512.5px;top:927.0px;border-left-width:3.5px;border-right-width:3.5px"></div>
<div class="t" style="left:561px;top:921.0px;height:16px;line-height:16px;font-size:12px">业务员</div>
<div style="left:647px;top:919px;width:189px;height:19px;background:#e8f6fb"></div>
<div style="left:647px;top:938px;width:190px;height:1px;background:#fbfdfe"></div>
<div style="left:649px;top:921px;width:187px;height:17px;background:#e6f4fa;border:1px solid #fbfdfe;border-right-width:2px"></div>
<div style="left:837px;top:919px;width:17px;height:19px;background:#f0f0f0;border:1px solid #9c9c9c"></div>
<div class="ddarr" style="left:841.5px;top:927.0px;border-left-width:3.5px;border-right-width:3.5px"></div>
<div style="left:861px;top:932px;width:2px;height:1px;background:#0a34c0"></div>
<div style="left:868px;top:932px;width:2px;height:1px;background:#0a34c0"></div>
<div class="t" style="left:889px;top:921.0px;height:16px;line-height:16px;font-size:12px">录入</div>
<div class="t m" style="left:918px;top:921.0px;height:16px;line-height:16px;font-size:11px;letter-spacing:-0.6px">2026-04-13</div>
<div class="t" style="left:233px;top:948.0px;height:16px;line-height:16px;font-size:12px">审核</div>
<div class="t" style="left:233px;top:976.0px;height:16px;line-height:16px;font-size:12px">备注</div>
<div style="left:319px;top:973px;width:681px;height:21px;background:#fff;border-bottom:1px solid #7a7a7a"></div>
<svg style="position:absolute;left:226px;top:1001px" width="15" height="18"><path d="M1.5 1.5h8l3 3v12h-11z" fill="#fff" stroke="#111" stroke-width="1"/><path d="M4.5 9a3 3 0 0 1 5-2.5M10 10a3 3 0 0 1-5 2.5" stroke="#109010" stroke-width="1.4" fill="none"/><path d="M8 5l3 1.5-2.5 2z M6.5 14l-3-1.5 2.5-2z" fill="#109010"/></svg>
<div class="t" style="left:251px;top:1002.0px;height:16px;line-height:16px;font-size:12px;color:#0a40c0">业务</div>
<div class="t" style="left:303px;top:1002.0px;height:16px;line-height:16px;font-size:12px;color:#008080">库存</div>
<svg style="position:absolute;left:327px;top:1002px" width="12" height="5"><path d="M0.5 3.5Q2 1 3.5 2.5T6 2M6.5 3.5Q8 1 9.5 2.5T12 2" stroke="#008080" stroke-width="0.9" fill="none"/></svg>
<div class="t" style="left:367px;top:1002.0px;height:16px;line-height:16px;font-size:12px;color:#008080">业务量</div>
<div style="left:992px;top:381px;width:925px;height:665px;background:#1a1a1a;border-radius:6px 6px 0 0"></div>
<div style="left:1917px;top:386px;width:1px;height:660px;background:#4a8ae0"></div>
<div style="left:993px;top:382px;width:923px;height:663px;background:#b9d1ea;border-radius:5px 5px 0 0;border-top:1px solid #ffffff;border-left:1px solid #dce8f4"></div>
<div style="left:1915px;top:386px;width:1px;height:659px;background:#20d8f0"></div>
<div style="left:993px;top:1044px;width:923px;height:1px;background:#20d8f0"></div>
<div style="left:994px;top:383px;width:921px;height:29px;background:linear-gradient(#8eacce,#bbd2ec);border-radius:4px 4px 0 0"></div>
<div style="left:1000px;top:412px;width:909px;height:626px;background:#f1f1f1"></div>
<svg style="position:absolute;left:1001px;top:390px" width="20" height="20" viewBox="0 0 20 20">
<path d="M7.8 8.5H11.5M9.5 8.5V14.5H11.5" stroke="#8c8c8c" stroke-width="1" fill="none"/>
<path d="M5.4 3L8.8 6.5L4.5 10.8L1 7.4Z" fill="#f8f000" stroke="#000" stroke-width="0.9"/>
<path d="M14.5 6.2L16.9 8.4L13.4 11.6L11.2 9.5Z" fill="#e800d0" stroke="#000" stroke-width="0.8"/>
<path d="M13.5 13.2L15.9 15.4L12.5 18.8L10.1 16.5Z" fill="#00d8d8" stroke="#000" stroke-width="0.8"/>
</svg>
<div class="t ns" style="left:1022px;top:393.0px;height:16px;line-height:16px;font-size:12px;color:#000">脚本程序&nbsp;&nbsp;voucher.QA</div>
<div style="left:1807px;top:391px;width:31px;height:18px;background:linear-gradient(#d8e4f0,#c4d4e6 50%,#bccde2);border:1px solid #7e8ea8;border-radius:3px"></div>
<div style="left:1841px;top:391px;width:31px;height:18px;background:linear-gradient(#d8e4f0,#c4d4e6 50%,#bccde2);border:1px solid #7e8ea8;border-radius:3px"></div>
<div style="left:1875px;top:391px;width:31px;height:18px;background:linear-gradient(#e8a090,#c84a30 50%,#b83a22);border:1px solid #6a2a20;border-radius:3px"></div>
<div style="left:1817px;top:399px;width:11px;height:5px;background:#e8e8e8;border:1px solid #444;border-radius:1px"></div>
<div style="left:1851px;top:395px;width:11px;height:9px;background:#f4f4f4;border:1.5px solid #3a3a4a;border-radius:2px"><div style="left:2px;top:2px;width:5px;height:3px;border:1px solid #3a3a4a;background:#c8d8ea"></div></div>
<svg style="position:absolute;left:1884px;top:394px" width="13" height="11"><path d="M3 2.5L10 8.5M10 2.5L3 8.5" stroke="#333" stroke-width="3.8" stroke-linecap="round"/><path d="M3 2.5L10 8.5M10 2.5L3 8.5" stroke="#f4f4f4" stroke-width="2" stroke-linecap="round"/></svg>
<div class="t lk" style="left:1020px;top:425.0px;height:16px;line-height:16px;font-size:12px">初始化</div>
<div class="t lk" style="left:1099px;top:425.0px;height:16px;line-height:16px;font-size:12px">打开</div>
<div class="t lk" style="left:1159px;top:425.0px;height:16px;line-height:16px;font-size:12px">新窗打开</div>
<div class="t lk" style="left:1243px;top:425.0px;height:16px;line-height:16px;font-size:12px">保存</div>
<div class="t lk" style="left:1309px;top:425.0px;height:16px;line-height:16px;font-size:12px">另存为</div>
<div class="t lk" style="left:1375px;top:425.0px;height:16px;line-height:16px;font-size:12px">界面设计</div>
<div class="t lk" style="left:1460px;top:425.0px;height:16px;line-height:16px;font-size:12px">搜索</div>
<div class="t lk" style="left:1531px;top:425.0px;height:16px;line-height:16px;font-size:12px">字体</div>
<div class="t lk" style="left:1591px;top:425.0px;height:16px;line-height:16px;font-size:12px">隐藏控件</div>
<div class="t lk" style="left:1686px;top:425.0px;height:16px;line-height:16px;font-size:12px">工具</div>
<div class="t lk" style="left:1748px;top:425.0px;height:16px;line-height:16px;font-size:12px">执行</div>
<div class="t lk" style="left:1821px;top:425.0px;height:16px;line-height:16px;font-size:12px">返回</div>
<svg style="position:absolute;left:1502px;top:426px" width="13" height="13"><path d="M3 1h5v4h3l-5.5 6.5L0 5h3z" fill="#6a6a6a" transform="translate(-0.5,1.2)"/><path d="M3 1h5v4h3l-5.5 6.5L0 5h3z" fill="#0010f8" transform="translate(1,0)"/></svg>
<svg style="position:absolute;left:1667px;top:426px" width="13" height="13"><path d="M3 1h5v4h3l-5.5 6.5L0 5h3z" fill="#6a6a6a" transform="translate(-0.5,1.2)"/><path d="M3 1h5v4h3l-5.5 6.5L0 5h3z" fill="#0010f8" transform="translate(1,0)"/></svg>
<div style="left:1001px;top:474px;width:535px;height:1px;background:#e0e0e0"></div>
<div style="left:1001px;top:453px;width:63px;height:22px;background:#f7f7f7;border:1px solid #e2e2e2;border-bottom:none"></div>
<div style="left:1064px;top:455px;width:58px;height:19px;background:#eeeeee;border:1px solid #e2e2e2;border-bottom:none"></div>
<div style="left:1122px;top:455px;width:57px;height:19px;background:#eeeeee;border:1px solid #e2e2e2;border-bottom:none"></div>
<div class="t" style="left:1007px;top:456.0px;height:16px;line-height:16px;font-size:12px">脚本程序</div>
<div class="t" style="left:1068px;top:457.5px;height:16px;line-height:16px;font-size:12px">说明帮助</div>
<div class="t" style="left:1127px;top:457.5px;height:16px;line-height:16px;font-size:12px">脚本说明</div>
<div style="left:1001px;top:475px;width:535px;height:538px;background:#f0f0f0;border:1px solid #dcdcdc"></div>
<div style="left:1004px;top:477px;width:513px;height:518px;background:#fff"></div>
<div style="left:1517px;top:477px;width:17px;height:518px;background:#f0f0f0"></div>
<div style="left:1524px;top:494px;width:2px;height:137px;background:#858585"></div>
<div style="left:1004px;top:995px;width:513px;height:16px;background:#f0f0f0"></div>
<div style="left:1021px;top:1002px;width:277px;height:2px;background:#7a7a7a"></div>
<div class="t m" style="left:1004px;top:478.5px;height:19px;line-height:19px;font-size:13.33px;color:#000080;-webkit-text-stroke:0.1px #000080">int&nbsp;init_test()</div>
<div class="t m" style="left:1004px;top:497.5px;height:19px;line-height:19px;font-size:13.33px;color:#000080;-webkit-text-stroke:0.1px #000080">{</div>
<div class="t m" style="left:1004px;top:516.5px;height:19px;line-height:19px;font-size:13.33px;color:#000080;-webkit-text-stroke:0.1px #000080">&nbsp;&nbsp;return&nbsp;1;</div>
<div class="t m" style="left:1004px;top:535.5px;height:19px;line-height:19px;font-size:13.33px;color:#000080;-webkit-text-stroke:0.1px #000080">};</div>
<div class="t m" style="left:1004px;top:573.5px;height:19px;line-height:19px;font-size:13.33px;color:#000080;-webkit-text-stroke:0.1px #000080">int&nbsp;create_voucher()</div>
<div class="t m" style="left:1004px;top:592.5px;height:19px;line-height:19px;font-size:13.33px;color:#000080;-webkit-text-stroke:0.1px #000080">{</div>
<div class="t m" style="left:1004px;top:611.5px;height:19px;line-height:19px;font-size:13.33px;color:#000080;-webkit-text-stroke:0.1px #000080">/////</div>
<div class="t m" style="left:1004px;top:630.5px;height:19px;line-height:19px;font-size:13.33px;color:#000080;-webkit-text-stroke:0.1px #000080">&nbsp;&nbsp;return&nbsp;1;</div>
<div class="t m" style="left:1004px;top:649.5px;height:19px;line-height:19px;font-size:13.33px;color:#000080;-webkit-text-stroke:0.1px #000080">};</div>
<div class="t m" style="left:1004px;top:687.5px;height:19px;line-height:19px;font-size:13.33px;color:#000080;-webkit-text-stroke:0.1px #000080">int&nbsp;func_show()</div>
<div class="t m" style="left:1004px;top:706.5px;height:19px;line-height:19px;font-size:13.33px;color:#000080;-webkit-text-stroke:0.1px #000080">{</div>
<div class="t m" style="left:1004px;top:725.5px;height:19px;line-height:19px;font-size:13.33px;color:#000080;-webkit-text-stroke:0.1px #000080">&nbsp;&nbsp;return&nbsp;1;</div>
<div class="t m" style="left:1004px;top:744.5px;height:19px;line-height:19px;font-size:13.33px;color:#000080;-webkit-text-stroke:0.1px #000080">};</div>
<div class="t m" style="left:1004px;top:782.5px;height:19px;line-height:19px;font-size:13.33px;color:#000080;-webkit-text-stroke:0.1px #000080">int&nbsp;cell_change()</div>
<div class="t m" style="left:1004px;top:801.5px;height:19px;line-height:19px;font-size:13.33px;color:#000080;-webkit-text-stroke:0.1px #000080">{</div>
<div class="t m" style="left:1004px;top:820.5px;height:19px;line-height:19px;font-size:13.33px;color:#000080;-webkit-text-stroke:0.1px #000080">&nbsp;&nbsp;//change_col,change_col_id,change_row_id</div>
<div class="t m" style="left:1004px;top:839.5px;height:19px;line-height:19px;font-size:13.33px;color:#000080;-webkit-text-stroke:0.1px #000080">&nbsp;&nbsp;return&nbsp;1;</div>
<div class="t m" style="left:1004px;top:858.5px;height:19px;line-height:19px;font-size:13.33px;color:#000080;-webkit-text-stroke:0.1px #000080">};</div>
<div class="t m" style="left:1004px;top:896.5px;height:19px;line-height:19px;font-size:13.33px;color:#000080;-webkit-text-stroke:0.1px #000080">int&nbsp;obj_change()</div>
<div class="t m" style="left:1004px;top:915.5px;height:19px;line-height:19px;font-size:13.33px;color:#000080;-webkit-text-stroke:0.1px #000080">{</div>
<div class="t m" style="left:1004px;top:934.5px;height:19px;line-height:19px;font-size:13.33px;color:#000080;-webkit-text-stroke:0.1px #000080">&nbsp;&nbsp;//msg(change_obj)</div>
<div class="t m" style="left:1004px;top:953.5px;height:19px;line-height:19px;font-size:13.33px;color:#000080;-webkit-text-stroke:0.1px #000080">&nbsp;&nbsp;return&nbsp;1;</div>
<div class="t m" style="left:1004px;top:972.5px;height:19px;line-height:19px;font-size:13.33px;color:#000080;-webkit-text-stroke:0.1px #000080">};</div>
<div style="left:1044px;top:610px;width:1px;height:19px;background:#000"></div>
<div style="left:1537px;top:453px;width:3px;height:562px;background:#a8c8f0"></div>
<div class="t nv" style="left:1548px;top:459.0px;height:16px;line-height:16px;font-size:12px">类型</div>
<div style="left:1604px;top:456px;width:107px;height:20px;background:#fcfcfc"></div>
<div style="left:1710px;top:456px;width:17px;height:19px;background:#f0f0f0;border:1px solid #8c8c8c"></div>
<div class="ddarr" style="left:1713.5px;top:464px"></div>
<div class="t" style="left:1608px;top:459.0px;height:16px;line-height:16px;font-size:12px">全部</div>
<div class="cbk" style="left:1733px;top:460px"><svg width="13" height="13" style="position:absolute;left:0;top:0"><path d="M3 6.5L5.5 9L10 4" stroke="#fff" stroke-width="1.3" fill="none"/></svg></div>
<div class="t" style="left:1748px;top:459.0px;height:16px;line-height:16px;font-size:12px">隐藏不可见项目</div>
<div class="t nv" style="left:1847px;top:458.0px;height:16px;line-height:16px;font-size:12px">对齐</div>
<div class="t nv" style="left:1548px;top:486.0px;height:16px;line-height:16px;font-size:12px">鼠标所在</div>
<div style="left:1605px;top:485px;width:115px;height:20px;background:#fff;border-bottom:1px solid #8a8a8a;border-radius:2px"></div>
<div class="t m" style="left:1607px;top:487.0px;height:16px;line-height:16px;font-size:11px;letter-spacing:-0.6px">ScrollBox1</div>
<div style="left:1726px;top:485px;width:119px;height:20px;background:#fff;border-bottom:1px solid #8a8a8a;border-radius:2px"></div>
<div style="left:1849px;top:483px;width:52px;height:22px;background:#f4f4f4;border:1px solid #d0d0d0;border-radius:3px"></div>
<div class="t" style="left:1859px;top:486.0px;height:16px;line-height:16px;font-size:12px">定位G</div>
<div class="t" style="left:1548px;top:511.0px;height:16px;line-height:16px;font-size:12px">控件坐标</div>
<div style="left:1605px;top:510px;width:33px;height:19px;background:#fff;border-bottom:1px solid #9a9a9a;border-radius:2px"></div>
<div style="left:1646px;top:510px;width:33px;height:19px;background:#fff;border-bottom:1px solid #9a9a9a;border-radius:2px"></div>
<div style="left:1685px;top:510px;width:33px;height:19px;background:#fff;border-bottom:1px solid #9a9a9a;border-radius:2px"></div>
<div style="left:1726px;top:510px;width:33px;height:19px;background:#fff;border-bottom:1px solid #9a9a9a;border-radius:2px"></div>
<div class="t" style="left:1764px;top:511.0px;height:16px;line-height:16px;font-size:12px">鼠标坐标</div>
<div style="left:1822px;top:509px;width:34px;height:19px;background:#fff;border-bottom:1px solid #9a9a9a;border-radius:2px"></div>
<div style="left:1863px;top:509px;width:34px;height:19px;background:#fff;border-bottom:1px solid #9a9a9a;border-radius:2px"></div>
<div class="t m" style="left:1824px;top:511.0px;height:16px;line-height:16px;font-size:11px;letter-spacing:-0.6px">423</div>
<div class="t m" style="left:1865px;top:511.0px;height:16px;line-height:16px;font-size:11px;letter-spacing:-0.6px">17</div>
<svg style="position:absolute;left:1547px;top:541px" width="8" height="10"><path d="M1.5 1L5.5 5L1.5 9" stroke="#808080" stroke-width="1.3" fill="none"/></svg>
<div style="left:1558px;top:546px;width:5px;height:0;border-top:1px dotted #888"></div>
<div style="left:1563px;top:539px;width:14px;height:14px;border:1.5px solid #111;background:#fff0"></div>
<div class="t ns" style="left:1583px;top:537.0px;height:16px;line-height:16px;font-size:13px;color:#1a1a1a">Panel_Func  TPanel</div>
<svg style="position:absolute;left:1547px;top:563px" width="8" height="10"><path d="M1.5 1L5.5 5L1.5 9" stroke="#808080" stroke-width="1.3" fill="none"/></svg>
<div style="left:1558px;top:568px;width:5px;height:0;border-top:1px dotted #888"></div>
<div style="left:1563px;top:561px;width:14px;height:14px;border:1.5px solid #111;background:#fff0"></div>
<div class="t ns" style="left:1583px;top:559.0px;height:16px;line-height:16px;font-size:13px;color:#1a1a1a">Panel_Main  TPanel</div>
<div style="left:1552px;top:590px;width:11px;height:0;border-top:1px dotted #888"></div>
<div style="left:1563px;top:583px;width:14px;height:14px;border:1.5px solid #111;background:#fff0"></div>
<div class="t ns" style="left:1583px;top:581.0px;height:16px;line-height:16px;font-size:13px;color:#1a1a1a">ScrollBox_Dev  TScrollBox</div>
<svg style="position:absolute;left:1547px;top:607px" width="8" height="10"><path d="M1.5 1L5.5 5L1.5 9" stroke="#808080" stroke-width="1.3" fill="none"/></svg>
<div style="left:1558px;top:612px;width:5px;height:0;border-top:1px dotted #888"></div>
<svg style="position:absolute;left:1563px;top:603px" width="14" height="16"><path d="M1.5 1v11M1.5 1h11v3h-11M1.5 6h4M1.5 9h4M1.5 12h5" stroke="#111" stroke-width="1.2" fill="none"/><path d="M3 7h3v3h-3z" fill="#1030c0"/><path d="M3 2h2M6 2h2M9 2h2" stroke="#1030c0"/><path d="M6 14h1M9 14h1M12 14h1" stroke="#111"/></svg>
<div class="t ns" style="left:1583px;top:603.0px;height:16px;line-height:16px;font-size:13px;color:#1a1a1a">PopupMenu_Oper  TPopupMenu</div>
<svg style="position:absolute;left:1547px;top:629px" width="8" height="10"><path d="M1.5 1L5.5 5L1.5 9" stroke="#808080" stroke-width="1.3" fill="none"/></svg>
<div style="left:1558px;top:634px;width:5px;height:0;border-top:1px dotted #888"></div>
<svg style="position:absolute;left:1563px;top:625px" width="14" height="16"><path d="M1.5 1v11M1.5 1h11v3h-11M1.5 6h4M1.5 9h4M1.5 12h5" stroke="#111" stroke-width="1.2" fill="none"/><path d="M3 7h3v3h-3z" fill="#1030c0"/><path d="M3 2h2M6 2h2M9 2h2" stroke="#1030c0"/><path d="M6 14h1M9 14h1M12 14h1" stroke="#111"/></svg>
<div class="t ns" style="left:1583px;top:625.0px;height:16px;line-height:16px;font-size:13px;color:#1a1a1a">PopupMenu_Item  TPopupMenu</div>
<svg style="position:absolute;left:1547px;top:651px" width="8" height="10"><path d="M1.5 1L5.5 5L1.5 9" stroke="#808080" stroke-width="1.3" fill="none"/></svg>
<div style="left:1558px;top:656px;width:5px;height:0;border-top:1px dotted #888"></div>
<svg style="position:absolute;left:1563px;top:647px" width="14" height="16"><path d="M1.5 1v11M1.5 1h11v3h-11M1.5 6h4M1.5 9h4M1.5 12h5" stroke="#111" stroke-width="1.2" fill="none"/><path d="M3 7h3v3h-3z" fill="#1030c0"/><path d="M3 2h2M6 2h2M9 2h2" stroke="#1030c0"/><path d="M6 14h1M9 14h1M12 14h1" stroke="#111"/></svg>
<div class="t ns" style="left:1583px;top:647.0px;height:16px;line-height:16px;font-size:13px;color:#1a1a1a">PopupMenu_Csp_Itf  TPopupMenu</div>
<svg style="position:absolute;left:1547px;top:673px" width="8" height="10"><path d="M1.5 1L5.5 5L1.5 9" stroke="#808080" stroke-width="1.3" fill="none"/></svg>
<div style="left:1558px;top:678px;width:5px;height:0;border-top:1px dotted #888"></div>
<svg style="position:absolute;left:1563px;top:669px" width="14" height="16"><path d="M1.5 1v11M1.5 1h11v3h-11M1.5 6h4M1.5 9h4M1.5 12h5" stroke="#111" stroke-width="1.2" fill="none"/><path d="M3 7h3v3h-3z" fill="#1030c0"/><path d="M3 2h2M6 2h2M9 2h2" stroke="#1030c0"/><path d="M6 14h1M9 14h1M12 14h1" stroke="#111"/></svg>
<div class="t ns" style="left:1583px;top:669.0px;height:16px;line-height:16px;font-size:13px;color:#1a1a1a">PopupMenu_Print_Ext  TPopupMenu</div>
<div style="left:1552px;top:700px;width:11px;height:0;border-top:1px dotted #888"></div>
<svg style="position:absolute;left:1563px;top:691px" width="14" height="16"><path d="M1.5 1v11M1.5 1h11v3h-11M1.5 6h4M1.5 9h4M1.5 12h5" stroke="#111" stroke-width="1.2" fill="none"/><path d="M3 7h3v3h-3z" fill="#1030c0"/><path d="M3 2h2M6 2h2M9 2h2" stroke="#1030c0"/><path d="M6 14h1M9 14h1M12 14h1" stroke="#111"/></svg>
<div class="t ns" style="left:1583px;top:691.0px;height:16px;line-height:16px;font-size:13px;color:#1a1a1a">PopupMenu_Create_Ref  TPopupMenu</div>
<svg style="position:absolute;left:1547px;top:717px" width="8" height="10"><path d="M1.5 1L5.5 5L1.5 9" stroke="#808080" stroke-width="1.3" fill="none"/></svg>
<div style="left:1558px;top:722px;width:5px;height:0;border-top:1px dotted #888"></div>
<svg style="position:absolute;left:1563px;top:713px" width="14" height="16"><path d="M1.5 1v11M1.5 1h11v3h-11M1.5 6h4M1.5 9h4M1.5 12h5" stroke="#111" stroke-width="1.2" fill="none"/><path d="M3 7h3v3h-3z" fill="#1030c0"/><path d="M3 2h2M6 2h2M9 2h2" stroke="#1030c0"/><path d="M6 14h1M9 14h1M12 14h1" stroke="#111"/></svg>
<div class="t ns" style="left:1583px;top:713.0px;height:16px;line-height:16px;font-size:13px;color:#1a1a1a">PopupMenu_Main_Res  TPopupMenu</div>
<div style="left:1552px;top:744px;width:11px;height:0;border-top:1px dotted #888"></div>
<svg style="position:absolute;left:1563px;top:735px" width="14" height="16"><path d="M1.5 1v11M1.5 1h11v3h-11M1.5 6h4M1.5 9h4M1.5 12h5" stroke="#111" stroke-width="1.2" fill="none"/><path d="M3 7h3v3h-3z" fill="#1030c0"/><path d="M3 2h2M6 2h2M9 2h2" stroke="#1030c0"/><path d="M6 14h1M9 14h1M12 14h1" stroke="#111"/></svg>
<div class="t ns" style="left:1583px;top:735.0px;height:16px;line-height:16px;font-size:13px;color:#1a1a1a">PopupMenu_Time_Set  TPopupMenu</div>
<svg style="position:absolute;left:1547px;top:761px" width="8" height="10"><path d="M1.5 1L5.5 5L1.5 9" stroke="#808080" stroke-width="1.3" fill="none"/></svg>
<div style="left:1558px;top:766px;width:5px;height:0;border-top:1px dotted #888"></div>
<svg style="position:absolute;left:1563px;top:757px" width="14" height="16"><path d="M1.5 1v11M1.5 1h11v3h-11M1.5 6h4M1.5 9h4M1.5 12h5" stroke="#111" stroke-width="1.2" fill="none"/><path d="M3 7h3v3h-3z" fill="#1030c0"/><path d="M3 2h2M6 2h2M9 2h2" stroke="#1030c0"/><path d="M6 14h1M9 14h1M12 14h1" stroke="#111"/></svg>
<div class="t ns" style="left:1583px;top:757.0px;height:16px;line-height:16px;font-size:13px;color:#1a1a1a">PopupMenu_Main_Res_Batch_No  TPopupMenu</div>
<div style="left:1551px;top:551px;width:0;height:9px;border-left:1px dotted #888"></div>
<div style="left:1551px;top:574px;width:0;height:30px;border-left:1px dotted #888"></div>
<div style="left:1551px;top:618px;width:0;height:8px;border-left:1px dotted #888"></div>
<div style="left:1551px;top:640px;width:0;height:8px;border-left:1px dotted #888"></div>
<div style="left:1551px;top:662px;width:0;height:8px;border-left:1px dotted #888"></div>
<div style="left:1551px;top:684px;width:0;height:30px;border-left:1px dotted #888"></div>
<div style="left:1551px;top:728px;width:0;height:30px;border-left:1px dotted #888"></div>
<div style="left:1001px;top:1015px;width:908px;height:1px;background:#d8d8d8"></div>
<div class="t" style="left:1013px;top:1020.0px;height:16px;line-height:16px;font-size:12px">行号</div>
<div style="left:1049px;top:1018px;width:1px;height:20px;background:#d0d0d0"></div>
<div style="left:1099px;top:1018px;width:1px;height:20px;background:#d0d0d0"></div>
<div style="left:1149px;top:1018px;width:1px;height:20px;background:#d0d0d0"></div>
<div style="left:1199px;top:1018px;width:1px;height:20px;background:#d0d0d0"></div>
<div class="t" style="left:898px;top:1020.0px;width:200px;text-align:right;height:16px;line-height:16px;font-size:13px">8</div>
<div class="t" style="left:1114px;top:1020.0px;height:16px;line-height:16px;font-size:12px">列号</div>
<div class="t" style="left:998px;top:1020.0px;width:200px;text-align:right;height:16px;line-height:16px;font-size:13px">6</div>
<div style="left:1907px;top:1028px;width:2px;height:2px;background:#b0b0b0"></div>
<div style="left:1903px;top:1032px;width:2px;height:2px;background:#b0b0b0"></div>
<div style="left:1907px;top:1032px;width:2px;height:2px;background:#b0b0b0"></div>
<div style="left:1899px;top:1036px;width:2px;height:2px;background:#b0b0b0"></div>
<div style="left:1903px;top:1036px;width:2px;height:2px;background:#b0b0b0"></div>
<div style="left:1907px;top:1036px;width:2px;height:2px;background:#b0b0b0"></div>
<svg style="position:absolute;left:1868px;top:901px" width="53" height="53" viewBox="0 0 53 53"><circle cx="26.5" cy="27" r="24" fill="#fdfdfd" stroke="#2a86f0" stroke-width="2"/>
<path d="M13 22.5C16 15 21 11 26 15.5" stroke="#1a4a9a" stroke-width="2" fill="none"/><path d="M22 24C25 20 29 20 32 24" stroke="#1a4a9a" stroke-width="1.6" fill="none"/>
<path d="M14 24C9 28 9 36 15 39H29" stroke="#3ab870" stroke-width="1.8" fill="none"/>
<text x="15" y="36.5" font-size="11.5" font-weight="bold" font-style="italic" fill="#1f58b0" textLength="33" lengthAdjust="spacingAndGlyphs">智能科技</text>
<text x="17" y="47" font-size="5" fill="#888">MiG</text></svg>
<div style="left:0px;top:1121px;width:1920px;height:31px;background:#f0f0f0"></div>
<div class="t ns" style="left:6px;top:1130.0px;height:16px;line-height:16px;font-size:12px;font-weight:bold;color:#0000f0">导航窗口</div>
<div class="t ns" style="left:68px;top:1130.0px;height:16px;line-height:16px;font-size:12px;font-weight:bold;color:#0000f0">质量检查<span style="font-family:Liberation Mono;font-size:11px;letter-spacing:-0.6px">/QA</span></div>
<div class="t ns" style="left:148px;top:1130.0px;height:16px;line-height:16px;font-size:12px;font-weight:bold;color:#0000f0">单据看台</div>
<div class="t ns" style="left:209px;top:1130.0px;height:16px;line-height:16px;font-size:12px;font-weight:bold;color:#e020e0">脚本程序<span style="font-family:Liberation Mono;font-size:11px;letter-spacing:-0.6px">voucher.QA</span></div>
<div style="left:60px;top:1124px;width:1px;height:28px;background:#a0a0a0"></div>
<div style="left:140px;top:1124px;width:1px;height:28px;background:#a0a0a0"></div>
<div style="left:202px;top:1124px;width:1px;height:28px;background:#a0a0a0"></div>
<div style="left:324px;top:1124px;width:1px;height:28px;background:#a0a0a0"></div>
<div class="t m" style="left:1665px;top:1131.0px;height:16px;line-height:16px;font-size:11px;letter-spacing:-0.6px"><span style="font-size:12px;letter-spacing:0">小型机</span>-XG-NG</div>
<div class="t m" style="left:1817px;top:1131.0px;height:16px;line-height:16px;font-size:11px;letter-spacing:-0.6px">admin</div>
<div class="t m" style="left:1859px;top:1131.0px;height:16px;line-height:16px;font-size:11px;letter-spacing:-0.6px">2026-04-12</div></body></html>
